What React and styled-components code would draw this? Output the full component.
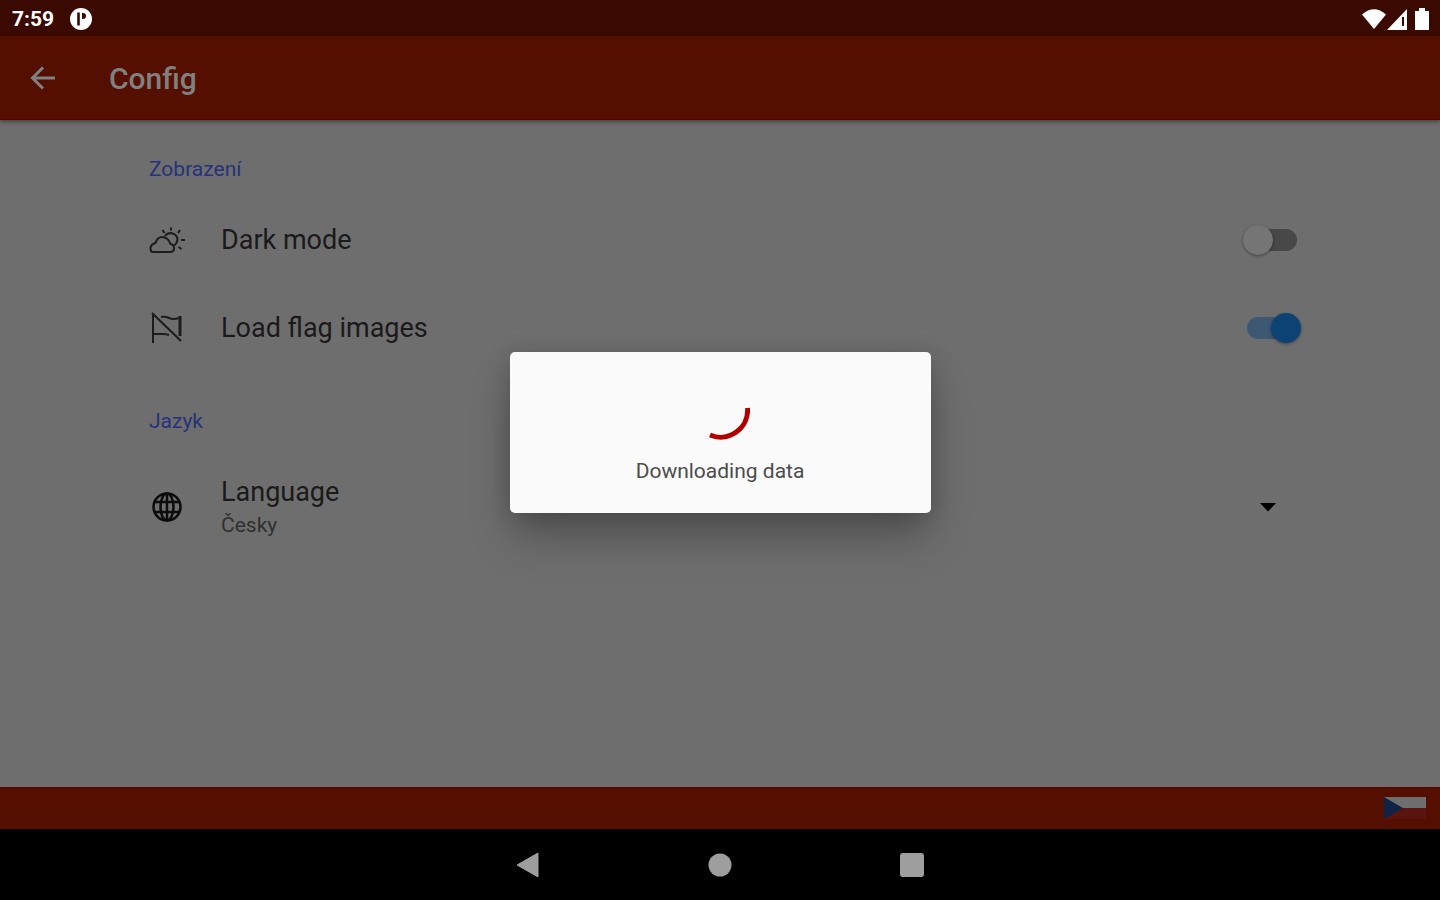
import React, { useState } from "react";
import styled, { createGlobalStyle } from "styled-components";

export default function App() {
  const [darkMode, setDarkMode] = useState(false);
  const [loadFlags, setLoadFlags] = useState(true);
  const [language, setLanguage] = useState("cs");

  return (
    <Device>
      <GlobalStyle />
      <StatusBar>
        <span>7:59</span>
        <AppBadge />
        <StatusIcons />
      </StatusBar>

      <Screen>
        <AppBar>
          <BackButton aria-label="Back">
            <svg width="26" height="24" viewBox="0 0 26 24">
              <path
                d="M25 12H3M13 1.5 2.5 12 13 22.5"
                fill="none"
                stroke="currentColor"
                strokeWidth="3"
              />
            </svg>
          </BackButton>
          <Title>Config</Title>
        </AppBar>

        <Content>
          <SectionTitle>Zobrazení</SectionTitle>
          <Row>
            <IconSlot>
              <PartlySunnyIcon />
            </IconSlot>
            <RowText>
              <RowLabel htmlFor="dark-mode">Dark mode</RowLabel>
            </RowText>
            <Switch
              id="dark-mode"
              type="checkbox"
              checked={darkMode}
              onChange={(e) => setDarkMode(e.target.checked)}
            />
          </Row>
          <Row>
            <IconSlot>
              <FlagOffIcon />
            </IconSlot>
            <RowText>
              <RowLabel htmlFor="load-flags">Load flag images</RowLabel>
            </RowText>
            <Switch
              id="load-flags"
              type="checkbox"
              checked={loadFlags}
              onChange={(e) => setLoadFlags(e.target.checked)}
            />
          </Row>

          <SectionTitle>Jazyk</SectionTitle>
          <Row>
            <IconSlot>
              <GlobeIcon />
            </IconSlot>
            <RowText>
              <RowLabel htmlFor="language">Language</RowLabel>
              <LanguageSelect
                id="language"
                value={language}
                onChange={(e) => setLanguage(e.target.value)}
              >
                <option value="cs">Česky</option>
                <option value="en">English</option>
              </LanguageSelect>
            </RowText>
            <Caret width="16" height="10" viewBox="0 0 16 10">
              <path d="M0 1h16L8 9.5z" fill="#000" />
            </Caret>
          </Row>
        </Content>

        <Footer>
          <CzechFlag />
        </Footer>

        <Overlay>
          <Dialog role="dialog" aria-labelledby="progress-text">
            <svg width="60" height="60" viewBox="0 0 60 60">
              <path
                d="M57.500 28A27 27 0 0 1 20 55"
                fill="none"
                stroke="#b00000"
                strokeWidth="5"
              />
            </svg>
            <DialogText id="progress-text">Downloading data</DialogText>
          </Dialog>
        </Overlay>
      </Screen>

      <NavBar>
        <NavButton aria-label="Back">
          <svg width="26" height="26" viewBox="0 0 26 26">
            <path d="M23 1v24L2 13z" fill="currentColor" stroke="currentColor" strokeLinejoin="round" />
          </svg>
        </NavButton>
        <NavButton aria-label="Home">
          <svg width="26" height="26" viewBox="0 0 26 26">
            <circle cx="13" cy="13" r="11.5" fill="currentColor" />
          </svg>
        </NavButton>
        <NavButton aria-label="Overview">
          <svg width="26" height="26" viewBox="0 0 26 26">
            <rect x="1" y="1" width="24" height="24" rx="3" fill="currentColor" />
          </svg>
        </NavButton>
      </NavBar>
    </Device>
  );
}

function AppBadge() {
  return (
    <svg width="22" height="22" viewBox="0 0 22 22">
      <circle cx="11" cy="11" r="11" fill="#fff" />
      <path d="M8.500 4.500v13" stroke="#3a0900" strokeWidth="2.600" />
      <path d="M12 5h1q3 0 3 3t-3 3h-1z" fill="#3a0900" />
    </svg>
  );
}

function StatusIcons() {
  return (
    <StatusRight width="68" height="24" viewBox="0 0 68 24">
      {/* wifi */}
      <path d="M0 7.500Q12 -3 24 7.500L12 22z" fill="#fff" />
      {/* signal */}
      <path d="M45 2v21H25z" fill="#fff" />
      <path d="M41 10v9" stroke="#3a0900" strokeWidth="2" />
      {/* battery */}
      <path d="M53 4h4V1h6v3h4v19H53z" fill="#fff" />
    </StatusRight>
  );
}

function PartlySunnyIcon() {
  return (
    <svg width="36" height="28" viewBox="0 0 36 28" fill="none" stroke="#1c1c1c" strokeWidth="2">
      <path d="M4 26H22Q25 25.500 25 22.500 25 18.500 21.500 18 19 11 13 11 8.500 11 6.500 17 1.500 18.500 1.500 22.500 1.500 26 4 26z" />
      <path d="M16 10Q18 7 22 7 28 8 28.500 13.500 28 17.500 25 19.500" />
      <path d="M22 1.500v3M13.500 4l2 3M31 4l-2 3M32 14h4M29.500 21l3 2" />
    </svg>
  );
}

function FlagOffIcon() {
  return (
    <svg width="36" height="34" viewBox="0 0 36 34" fill="none" stroke="#1c1c1c" strokeWidth="2">
      <path d="M4 4v28M4 23h10q3 0 6 1M12 6q4-1 8 1t10 0" />
      <path d="M31 5v20" strokeWidth="3" />
      <path d="M3 2 32 30" />
    </svg>
  );
}

function GlobeIcon() {
  return (
    <svg width="36" height="32" viewBox="0 0 36 32" fill="none" stroke="#0c0c0c" strokeWidth="2.500">
      <circle cx="18" cy="16" r="13.500" />
      <ellipse cx="18" cy="16" rx="6.500" ry="13.500" />
      <path d="M18 2v28M5 11h26M5 21h26" />
    </svg>
  );
}

function CzechFlag() {
  return (
    <svg width="42" height="24" viewBox="0 0 42 24">
      <path d="M0 0h42v11H0z" fill="#6e6e6e" />
      <path d="M0 11h42v11H0z" fill="#5a1410" />
      <path d="M0 0v22l19-11z" fill="#0f2445" />
    </svg>
  );
}

const GlobalStyle = createGlobalStyle`
  * {
    box-sizing: border-box;
  }
  body {
    margin: 0;
    font-family: Roboto, sans-serif;
  }
  svg {
    display: block;
    flex: none;
  }
`;
const Device = styled.div`
  min-height: 100vh;
  display: flex;
  flex-direction: column;
  background-color: #000;
`;
const StatusBar = styled.header`
  height: 36px;
  padding: 2px 10px 0 12px;
  display: flex;
  align-items: center;
  gap: 16px;
  background-color: #3a0900;
  color: #fff;
  font-size: 21px;
  font-weight: 700;
`;
const StatusRight = styled.svg`
  margin-left: auto;
`;
const Screen = styled.div`
  flex: 1;
  display: flex;
  flex-direction: column;
  position: relative;
  background-color: #6e6e6e;
`;
const AppBar = styled.div`
  height: 84px;
  padding: 0 20px;
  display: flex;
  align-items: center;
  gap: 44px;
  background-color: #540f00;
  border-bottom: 1px solid #5c0008;
  box-shadow: 0 2px 4px rgba(0, 0, 0, 0.4);
`;
const Title = styled.h1`
  margin: 0;
  padding-top: 2px;
  font-size: 30px;
  font-weight: 500;
  color: #808080;
`;
const IconButton = styled.button`
  padding: 0;
  border: 0;
  background: none;
  display: flex;
  align-items: center;
  justify-content: center;
`;
const BackButton = styled(IconButton)`
  width: 45px;
  height: 48px;
  color: #808080;
`;
const Content = styled.main`
  flex: 1;
  padding: 0 139px 0 149px;
`;
const SectionTitle = styled.h2`
  margin: 0;
  padding: 37px 0 15px;
  font-size: 21px;
  font-weight: 400;
  line-height: 24px;
  color: #27327c;
`;
const Row = styled.div`
  padding: 26px 0;
  display: flex;
  align-items: center;
`;
const IconSlot = styled.div`
  width: 72px;
`;
const RowText = styled.div`
  flex: 1;
  display: flex;
  flex-direction: column;
`;
const RowLabel = styled.label`
  font-size: 27px;
  line-height: 36px;
  color: #1a1a1a;
`;
const LanguageSelect = styled.select`
  appearance: none;
  height: 30px;
  padding: 0;
  border: 0;
  background: none;
  font-family: inherit;
  font-size: 21px;
  line-height: 30px;
  color: #303030;
`;
const Switch = styled.input`
  appearance: none;
  margin: 0;
  width: 58px;
  height: 30px;
  display: flex;
  align-items: center;
  justify-content: ${(props) => (props.checked ? "flex-end" : "flex-start")};
  border-radius: 15px;
  background: linear-gradient(
      ${(props) => (props.checked ? "#3c5872, #3c5872" : "#484848, #484848")}
    )
    content-box;
  padding: 4px;

  &::before {
    content: "";
    flex: none;
    width: 30px;
    height: 30px;
    margin: 0 -4px;
    border-radius: 50%;
    background-color: ${(props) => (props.checked ? "#0d4275" : "#757575")};
    box-shadow: 0 1px 3px rgba(0, 0, 0, 0.4);
  }
`;
const Caret = styled.svg`
  margin-right: 25px;
`;
const Footer = styled.footer`
  height: 42px;
  padding: 0 14px;
  display: flex;
  align-items: center;
  justify-content: flex-end;
  background-color: #540f00;
  border-top: 1px solid #5c0008;
`;
const Overlay = styled.div`
  position: absolute;
  inset: 0;
  display: flex;
  align-items: center;
  justify-content: center;
`;
const Dialog = styled.div`
  min-width: 421px;
  padding: 28px 36px 29px;
  display: flex;
  flex-direction: column;
  align-items: center;
  gap: 18px;
  border-radius: 5px;
  background-color: #fafafa;
  box-shadow: 0 28px 44px -4px rgba(0, 0, 0, 0.25),
    0 4px 24px rgba(0, 0, 0, 0.18);
`;
const DialogText = styled.p`
  margin: 0;
  font-size: 21px;
  line-height: 26px;
  color: #4c4c4c;
`;
const NavBar = styled.nav`
  height: 71px;
  display: flex;
  justify-content: center;
  background-color: #000;
`;
const NavButton = styled(IconButton)`
  width: 192px;
  color: #9e9e9e;
`;
